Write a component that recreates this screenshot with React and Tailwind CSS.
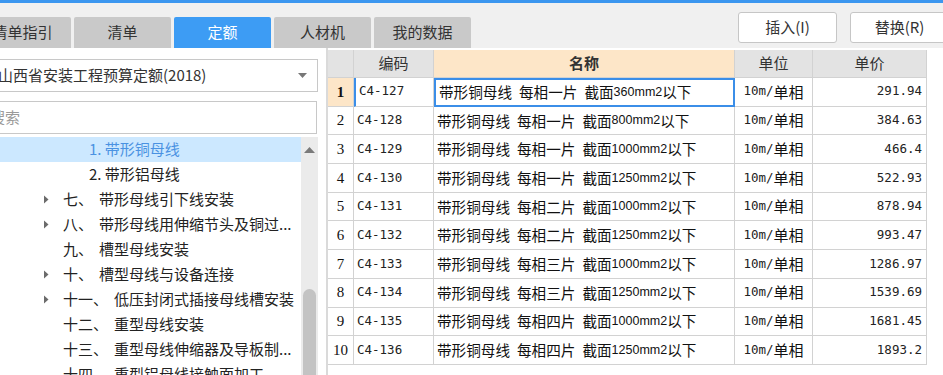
import React from "react";

const CJK = { fontFamily: '"Noto Sans CJK SC", "Noto Sans", sans-serif' };
const MONO = { fontFamily: '"DejaVu Sans Mono", monospace' };
const LAT = { fontFamily: '"Liberation Sans", Arial, sans-serif' };
const SERIF = { fontFamily: '"Liberation Serif", serif' };

const rows = [
  ["C4-127", "一", "360", "291.94"],
  ["C4-128", "一", "800", "384.63"],
  ["C4-129", "一", "1000", "466.4"],
  ["C4-130", "一", "1250", "522.93"],
  ["C4-131", "二", "1000", "878.94"],
  ["C4-132", "二", "1250", "993.47"],
  ["C4-133", "三", "1000", "1286.97"],
  ["C4-134", "三", "1250", "1539.69"],
  ["C4-135", "四", "1000", "1681.45"],
  ["C4-136", "四", "1250", "1893.2"],
];

const tree = [
  { indent: true, label: "1. 带形铜母线", selected: true },
  { indent: true, label: "2. 带形铝母线" },
  { arrow: true, num: "七、", text: "带形母线引下线安装" },
  { arrow: true, num: "八、", text: "带形母线用伸缩节头及铜过..." },
  { num: "九、", text: "槽型母线安装" },
  { arrow: true, num: "十、", text: "槽型母线与设备连接" },
  { arrow: true, num: "十一、", text: "低压封闭式插接母线槽安装" },
  { num: "十二、", text: "重型母线安装" },
  { num: "十三、", text: "重型母线伸缩器及导板制..." },
  { num: "十四、", text: "重型铝母线接触面加工" },
];

const tabs = ["清单指引", "清单", "定额", "人材机", "我的数据"];

function Arrow() {
  return (
    <svg width="6" height="9" viewBox="0 0 6 9" className="shrink-0">
      <path d="M1 0.5 L5.5 4.5 L1 8.5 Z" fill="#6b6b6b" />
    </svg>
  );
}

export default function App() {
  return (
    <div className="w-[943px] h-[375px] overflow-hidden bg-white text-[#333]" style={CJK}>
      <div className="h-[3px] bg-[#3b96ef]" />
      <div className="h-[45px] bg-[#f0f0f0] flex justify-between">
        <div className="flex items-end gap-[3px] ml-[-26px]">
          {tabs.map((t, i) => (
            <div
              key={t}
              className={
                "h-[31px] w-[97px] rounded-t-[2px] flex items-center justify-center text-[15px] " +
                (i === 2 ? "bg-[#3d9cf4] text-white" : "bg-[#c9c9c9] text-[#333]")
              }
            >
              {t}
            </div>
          ))}
        </div>
        <div className="flex gap-[13px] pt-[9px] mr-[-6px]">
          <div className="h-[31px] w-[99px] bg-white border border-[#c6c6c6] rounded-[3px] flex items-center justify-center text-[15px]">
            插入(I)
          </div>
          <div className="h-[31px] w-[99px] bg-white border border-[#c6c6c6] rounded-[3px] flex items-center justify-center text-[15px]">
            替换(R)
          </div>
        </div>
      </div>
      <div className="flex h-[327px]">
        {/* left panel */}
        <div className="w-[328px] shrink-0 border-r-2 border-[#dadada] flex flex-col overflow-hidden">
          <div className="pt-[11px] pr-[8px] ml-[-14px]">
            <div className="h-[33px] border border-[#c8c8c8] bg-white flex items-center justify-between pl-[11px] pr-[10px] text-[15px]">
              <span>山西省安装工程预算定额(2018)</span>
              <svg width="9" height="5" viewBox="0 0 9 5">
                <path d="M0 0 L9 0 L4.5 5 Z" fill="#777" />
              </svg>
            </div>
          </div>
          <div className="pt-[9px] pr-[9px] ml-[-14px]">
            <div className="h-[33px] border border-[#c8c8c8] bg-white flex items-center pl-[3px] text-[15px] text-[#9a9a9a]">
              搜索
            </div>
          </div>
          <div className="flex mt-[3px] flex-1 min-h-0">
            <div className="w-[301px] shrink-0 flex flex-col">
              {tree.map((r, i) => (
                <div
                  key={i}
                  className={
                    "h-[25px] shrink-0 flex items-center text-[15px] whitespace-nowrap " +
                    (r.selected ? "bg-[#cce8ff] text-[#4a92e2]" : "text-[#222]")
                  }
                >
                  {r.indent ? (
                    <span className="pl-[89px]">{r.label}</span>
                  ) : (
                    <>
                      <span className="w-[63px] pl-[43px] shrink-0 flex items-center">
                        {r.arrow ? <Arrow /> : null}
                      </span>
                      <span>{r.num}</span>
                      <span className="ml-[6px]">{r.text}</span>
                    </>
                  )}
                </div>
              ))}
            </div>
            <div className="w-[17px] shrink-0 bg-[#ebebeb] flex flex-col items-center">
              <svg width="11" height="6" viewBox="0 0 11 6" className="mt-[10px]">
                <path d="M0 6 L5.5 0 L11 6 Z" fill="#7a7a7a" />
              </svg>
              <div className="mt-[136px] w-[13px] flex-1 rounded-t-full bg-[#c3c3c3]" />
            </div>
          </div>
        </div>

        {/* right panel */}
        <div className="flex-1 pt-[2px] bg-white">
          <div className="w-[599px]">
            {/* header */}
            <div className="flex h-[28px] text-[15px]">
              <div className="w-[26px] bg-[#e3e3e3] border-r border-b border-[#d2d2d2]" />
              <div className="w-[80px] bg-[#e3e3e3] border-r border-b border-[#d2d2d2] flex items-center justify-center">
                编码
              </div>
              <div className="w-[301px] bg-[#fde6c8] border-r border-b border-[#d2d2d2] flex items-center justify-center font-bold">
                名称
              </div>
              <div className="w-[78px] bg-[#e3e3e3] border-r border-b border-[#d2d2d2] flex items-center justify-center">
                单位
              </div>
              <div className="w-[114px] bg-[#e3e3e3] border-r border-b border-[#d2d2d2] flex items-center justify-center">
                单价
              </div>
            </div>
            {rows.map((r, i) => {
              const sel = i === 0;
              return (
                <div key={i} className="flex h-[28.7px] text-[#111]">
                  <div
                    className={
                      "w-[26px] border-r border-b border-[#d2d2d2] flex items-center justify-center text-[15px] " +
                      (sel ? "bg-[#fde6c8] font-bold" : "bg-white")
                    }
                    style={SERIF}
                  >
                    {i + 1}
                  </div>
                  <div
                    className={
                      "w-[80px] border-r border-b border-[#d2d2d2] flex items-center pl-[3px] text-[12.5px] text-[#222] " +
                      (sel ? "border-l-2 border-l-[#3b8ee8] pl-[1px]" : "")
                    }
                    style={MONO}
                  >
                    {r[0]}
                  </div>
                  <div
                    className={
                      "w-[301px] flex items-center pl-[3px] text-[14.6px] whitespace-nowrap " +
                      (sel ? "border-2 border-[#3b8ee8] pl-[1px]" : "border-r border-b border-[#d2d2d2]")
                    }
                  >
                    <span>带形铜母线</span>
                    <span className="ml-[7px]">每相{r[1]}片</span>
                    <span className="ml-[7px]">截面</span>
                    <span className="text-[12.5px]" style={LAT}>
                      {r[2]}mm2
                    </span>
                    <span>以下</span>
                  </div>
                  <div className="w-[78px] border-r border-b border-[#d2d2d2] flex items-center justify-center">
                    <span className="text-[12.5px] text-[#222]" style={MONO}>
                      10m/
                    </span>
                    <span className="text-[15px]">单相</span>
                  </div>
                  <div
                    className="w-[114px] border-r border-b border-[#d2d2d2] flex items-center justify-end pr-[4px] text-[12.5px] text-[#222]"
                    style={MONO}
                  >
                    {r[3]}
                  </div>
                </div>
              );
            })}
          </div>
        </div>
      </div>
    </div>
  );
}
